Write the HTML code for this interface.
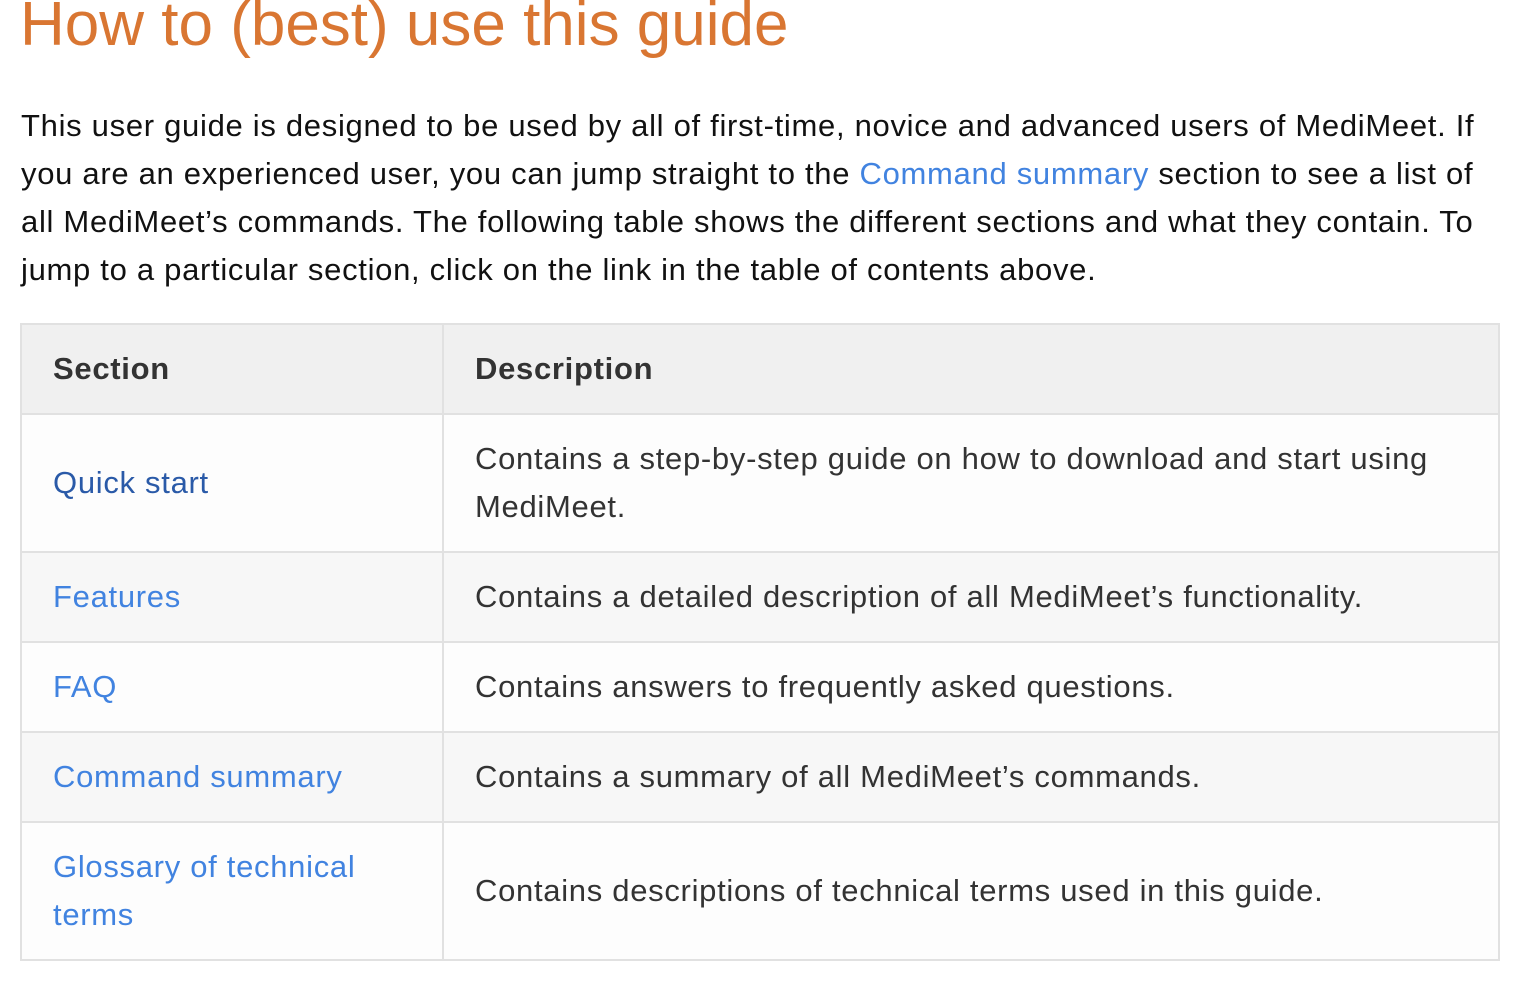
<!DOCTYPE html>
<html><head><meta charset="utf-8"><style>
body{margin:0;background:#fff;font-family:"Liberation Sans",sans-serif;width:1522px;height:983px;overflow:hidden;position:relative}
h1{position:absolute;left:20px;top:-15px;margin:0;font-weight:400;font-size:62px;color:#d97632;white-space:nowrap;line-height:80px}
p{position:absolute;left:21px;top:102px;margin:0;font-size:31px;letter-spacing:0.7px;line-height:48px;color:#111;white-space:nowrap}
a{color:#4183e0;text-decoration:none}
table{position:absolute;left:20px;top:323px;border-collapse:collapse;width:1480px;font-size:31px;letter-spacing:0.7px;color:#333}
td,th{border:2px solid #e1e1e1;padding:20px 31px;line-height:48px;text-align:left;white-space:nowrap}
th{background:#f0f0f0;font-weight:700;height:42px;padding-top:20px;padding-bottom:20px}
td:first-child,th:first-child{width:358px}
tr.a td{background:#fdfdfd}
tr.b td{background:#f7f7f7}
</style></head><body>
<h1>How to (best) use this guide</h1>
<p>This user guide is designed to be used by all of first-time, novice and advanced users of MediMeet. If<br>you are an experienced user, you can jump straight to the <a>Command summary</a> section to see a list of<br>all MediMeet’s commands. The following table shows the different sections and what they contain. To<br>jump to a particular section, click on the link in the table of contents above.</p>
<table>
<tr><th>Section</th><th>Description</th></tr>
<tr class="a"><td><a style="color:#2a5aa8">Quick start</a></td><td>Contains a step-by-step guide on how to download and start using<br>MediMeet.</td></tr>
<tr class="b"><td><a>Features</a></td><td>Contains a detailed description of all MediMeet’s functionality.</td></tr>
<tr class="a"><td><a>FAQ</a></td><td>Contains answers to frequently asked questions.</td></tr>
<tr class="b"><td><a>Command summary</a></td><td>Contains a summary of all MediMeet’s commands.</td></tr>
<tr class="a"><td><a>Glossary of technical<br>terms</a></td><td>Contains descriptions of technical terms used in this guide.</td></tr>
</table>
</body></html>
